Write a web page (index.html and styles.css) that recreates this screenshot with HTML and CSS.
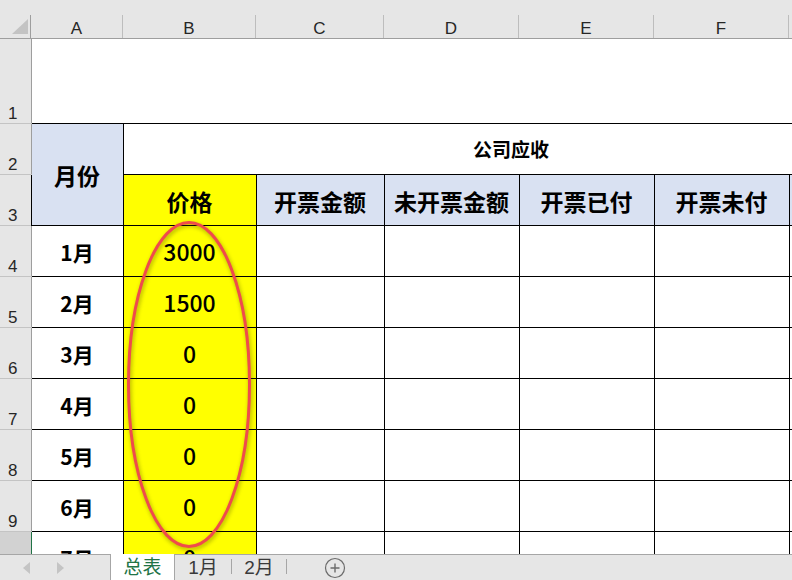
FILE: index.html
```html
<!DOCTYPE html>
<html lang="zh-CN">
<head>
    <meta charset="UTF-8">
    <title>公司应收 - 总表</title>
    <link rel="stylesheet" href="styles.css">
</head>
<body>
<div class="workbook">
    <div class="sheet">
        <table class="grid">
            <colgroup>
                <col class="c-rn"><col class="c-a"><col class="c-b"><col class="c-c">
                <col class="c-d"><col class="c-e"><col class="c-f"><col class="c-g">
            </colgroup>
            <thead>
                <tr class="colhdr">
                    <th class="corner">
                        <div class="lbl">
                            <svg width="30" height="23" viewBox="0 0 30 23"><polygon points="28,4 28,19 12,19" fill="#c3c3c3"/></svg>
                        </div>
                    </th>
                    <th><div class="lbl">A</div></th>
                    <th><div class="lbl">B</div></th>
                    <th><div class="lbl">C</div></th>
                    <th><div class="lbl">D</div></th>
                    <th><div class="lbl">E</div></th>
                    <th><div class="lbl">F</div></th>
                    <th><div class="lbl">G</div></th>
                </tr>
            </thead>
            <tbody>
                <tr class="r1">
                    <th class="rn">1</th>
                    <td colspan="7" class="blank"></td>
                </tr>
                <tr>
                    <th class="rn">2</th>
                    <td rowspan="2" class="cell blue hd">月份</td>
                    <td colspan="6" class="cell title">公司应收</td>
                </tr>
                <tr>
                    <th class="rn">3</th>
                    <td class="cell yellow hd">价格</td>
                    <td class="cell blue hd">开票金额</td>
                    <td class="cell blue hd">未开票金额</td>
                    <td class="cell blue hd">开票已付</td>
                    <td class="cell blue hd">开票未付</td>
                    <td class="cell blue"></td>
                </tr>
                <tr>
                    <th class="rn">4</th>
                    <td class="cell month">1月</td>
                    <td class="cell yellow num">3000</td>
                    <td class="cell"></td><td class="cell"></td><td class="cell"></td><td class="cell"></td><td class="cell"></td>
                </tr>
                <tr>
                    <th class="rn">5</th>
                    <td class="cell month">2月</td>
                    <td class="cell yellow num">1500</td>
                    <td class="cell"></td><td class="cell"></td><td class="cell"></td><td class="cell"></td><td class="cell"></td>
                </tr>
                <tr>
                    <th class="rn">6</th>
                    <td class="cell month">3月</td>
                    <td class="cell yellow num">0</td>
                    <td class="cell"></td><td class="cell"></td><td class="cell"></td><td class="cell"></td><td class="cell"></td>
                </tr>
                <tr>
                    <th class="rn">7</th>
                    <td class="cell month">4月</td>
                    <td class="cell yellow num">0</td>
                    <td class="cell"></td><td class="cell"></td><td class="cell"></td><td class="cell"></td><td class="cell"></td>
                </tr>
                <tr>
                    <th class="rn">8</th>
                    <td class="cell month">5月</td>
                    <td class="cell yellow num">0</td>
                    <td class="cell"></td><td class="cell"></td><td class="cell"></td><td class="cell"></td><td class="cell"></td>
                </tr>
                <tr>
                    <th class="rn">9</th>
                    <td class="cell month">6月</td>
                    <td class="cell yellow num">0</td>
                    <td class="cell"></td><td class="cell"></td><td class="cell"></td><td class="cell"></td><td class="cell"></td>
                </tr>
                <tr>
                    <th class="rn sel">10</th>
                    <td class="cell month">7月</td>
                    <td class="cell yellow num">0</td>
                    <td class="cell"></td><td class="cell"></td><td class="cell"></td><td class="cell"></td><td class="cell"></td>
                </tr>
            </tbody>
        </table>

        <!-- hand-drawn circle around the price column -->
        <svg class="mark" width="792" height="554" viewBox="0 0 792 554">
            <ellipse cx="189" cy="384.5" rx="60.5" ry="162" fill="none" stroke="#f04b4b" stroke-width="3"/>
        </svg>
    </div>

    <div class="tabbar">
        <div class="nav">
            <svg width="8" height="12" viewBox="0 0 8 12"><polygon points="7,0 7,12 0,6" fill="#c4c4c4"/></svg>
            <svg width="8" height="12" viewBox="0 0 8 12"><polygon points="1,0 1,12 8,6" fill="#c4c4c4"/></svg>
        </div>
        <div class="tab active">总表</div>
        <div class="tab t1">1月</div>
        <i class="sep"></i>
        <div class="tab t2">2月</div>
        <i class="sep"></i>
        <div class="rest">
            <svg class="add" width="22" height="22" viewBox="0 0 22 22">
                <circle cx="11" cy="11" r="9.5" fill="none" stroke="#6b6b6b" stroke-width="1.2"/>
                <path d="M11 6.5v9M6.5 11h9" stroke="#6b6b6b" stroke-width="1.4"/>
            </svg>
        </div>
    </div>
</div>
</body>
</html>
```

FILE: styles.css
```css
:root {
  --hdr-bg: #e6e6e6;
  --hdr-line: #9e9e9e;
  --hdr-sep: #bdbdbd;
  --blue: #d9e1f2;
  --yellow: #ffff00;
  --green: #217346;
}
body {
    margin: 0;
    padding: 0;
    background: #ffffff;
    font-family: "Liberation Sans", "Noto Sans CJK SC", sans-serif;
    color: #000;
}
.workbook {
    width: 792px;
    height: 580px;
    overflow: hidden;
}
.sheet {
    position: relative;
    height: 554px;
    overflow: hidden;
}

/* grid */
.grid {
    border-collapse: collapse;
    table-layout: fixed;
    width: 897px;
}
.c-rn { width: 31px; }
.c-a { width: 92px; }
.c-b { width: 133px; }
.c-c { width: 128px; }
.c-d { width: 135px; }
.c-e { width: 135px; }
.c-f { width: 135px; }
.c-g { width: 108px; }

.colhdr { height: 38px; }
.colhdr th {
    background: var(--hdr-bg);
    border-bottom: 1px solid var(--hdr-line);
    padding: 0;
    vertical-align: bottom;
    font-weight: normal;
    font-size: 17px;
    color: #262626;
}
.colhdr .lbl {
    box-sizing: border-box;
    height: 23px;
    padding-top: 2px;
    line-height: 23px;
    border-right: 1px solid var(--hdr-sep);
    text-align: center;
}
.corner .lbl {
    border-right-color: var(--hdr-line);
    text-align: left;
    padding-top: 0;
}
.corner svg { display: block; }

.rn {
    background: var(--hdr-bg);
    border-right: 1px solid var(--hdr-line);
    border-bottom: 1px solid #c4c4c4;
    padding: 0 5px 1px 0;
    text-align: center;
    vertical-align: bottom;
    font-weight: normal;
    font-size: 17px;
    line-height: 17px;
    color: #262626;
}
.rn.sel {
    background: #d2d2d2;
    border-right-color: var(--green);
}

tbody tr { height: 51px; }
tbody tr.r1 { height: 85px; }
.blank { border: none; }

.cell {
    border: 1px solid #000;
    padding: 0;
    text-align: center;
    vertical-align: middle;
    white-space: nowrap;
}
.blue { background: var(--blue); }
.yellow { background: var(--yellow); }
.hd {
    font-size: 23px;
    font-weight: bold;
    padding-top: 2px;
}
.title {
    font-size: 19px;
    font-weight: bold;
    padding-left: 2px;
}
.month {
    font-family: "Noto Sans CJK SC", sans-serif;
    font-size: 21px;
    font-weight: bold;
    padding-top: 3px;
}
.num {
    font-family: "Noto Sans CJK SC", sans-serif;
    font-size: 23px;
    font-weight: 500;
    padding-top: 1px;
}

.mark {
    position: absolute;
    top: 0;
    left: 0;
    pointer-events: none;
    filter: drop-shadow(1px 2px 2px rgba(60, 60, 0, 0.45));
}

/* sheet tabs */
.tabbar {
    display: flex;
    align-items: center;
    height: 26px;
    background: var(--hdr-bg);
    font-size: 19px;
    color: #3a3a3a;
}
.nav, .tab, .rest, .sep {
    align-self: stretch;
}
.nav {
    box-sizing: border-box;
    width: 111px;
    border-top: 1px solid #a6a6a6;
    border-right: 1px solid #a6a6a6;
    display: flex;
    align-items: center;
    gap: 25px;
    padding-left: 23px;
}
.tab {
    box-sizing: border-box;
    border-top: 1px solid #a6a6a6;
    display: flex;
    align-items: center;
    justify-content: center;
    line-height: 1;
}
.tab.active {
    width: 64px;
    background: #ffffff;
    color: var(--green);
    border-top: none;
    border-right: 1px solid #a6a6a6;
}
.tab.t1 { width: 56px; }
.tab.t2 { width: 54px; }
.sep {
    width: 1px;
    border-top: 1px solid #a6a6a6;
    background: linear-gradient(to bottom, transparent 4px, #a6a6a6 4px, #a6a6a6 19px, transparent 19px);
}
.rest {
    flex: 1;
    border-top: 1px solid #a6a6a6;
    display: flex;
    align-items: center;
    padding-left: 37px;
}
.add { display: block; }
```
